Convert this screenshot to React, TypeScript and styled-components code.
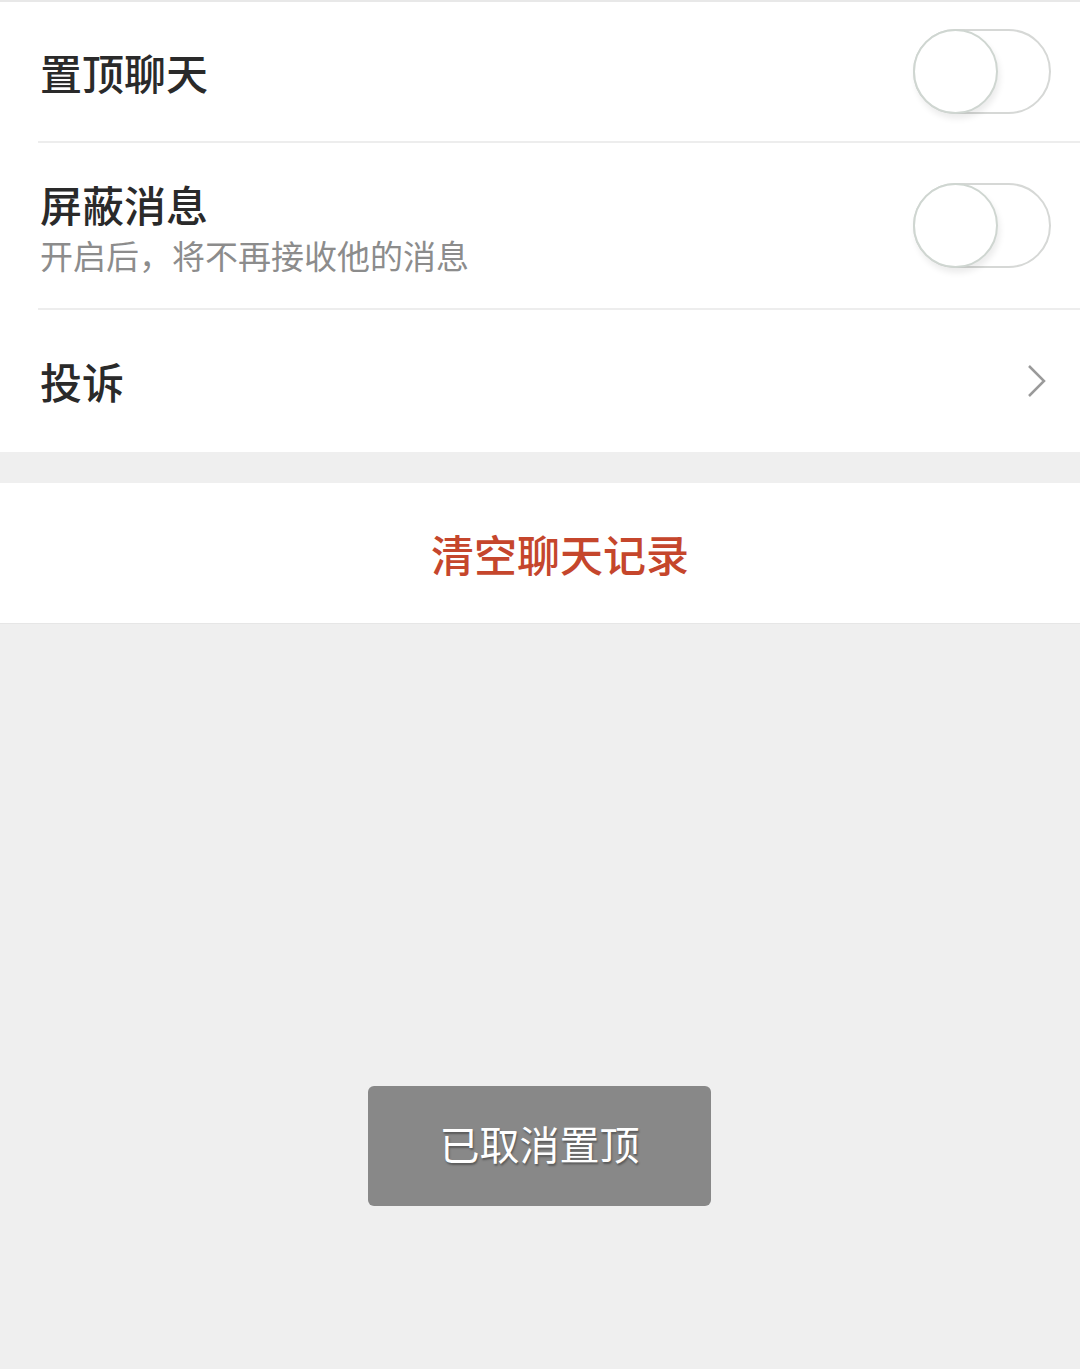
import styled, { createGlobalStyle } from "styled-components";

const GlobalStyle = createGlobalStyle`
  html, body {
    margin: 0;
    padding: 0;
    background: #efefef;
  }
  body {
    font-family: "Noto Sans CJK SC", "Noto Sans", sans-serif;
  }
`;

const Page = styled.div`
  min-height: 1369px;
  background: #efefef;
  border-top: 2px solid #e8e8e8;
  position: relative;
`;

const Group = styled.div`
  background: #fff;
  padding-left: 38px;
  margin-bottom: 31px;
`;

const Row = styled.div<{ $height: number; $last?: boolean }>`
  display: flex;
  align-items: center;
  justify-content: space-between;
  height: ${(p) => p.$height}px;
  padding-left: 2px;
  padding-right: 29px;
  box-sizing: border-box;
  border-bottom: ${(p) => (p.$last ? "none" : "2px solid #ededed")};
`;

const Labels = styled.div`
  display: flex;
  flex-direction: column;
  padding-top: 4px;
`;

const Title = styled.span`
  font-size: 42px;
  font-weight: 500;
  color: #2a2a2a;
  line-height: 48px;
`;

const Sub = styled.span`
  font-size: 33px;
  color: #8c8c8c;
  line-height: 42px;
  margin-top: 6px;
`;

const Track = styled.div`
  position: relative;
  width: 138px;
  height: 85px;
  border-radius: 43px;
  border: 2px solid #d6d8d6;
  box-sizing: border-box;
  background: #fff;
`;

const Knob = styled.div`
  position: absolute;
  left: -2px;
  top: -2px;
  width: 85px;
  height: 85px;
  border-radius: 50%;
  border: 2px solid #cfd6d1;
  box-sizing: border-box;
  background: #fff;
  box-shadow: 2px 5px 6px rgba(0, 0, 0, 0.08);
`;

const ClearButton = styled.div`
  background: #fff;
  height: 140px;
  display: flex;
  align-items: center;
  justify-content: center;
  border-bottom: 1px solid #e6e6e6;
  font-size: 43px;
  font-weight: 500;
  color: #c5462c;
  padding-left: 40px;
`;

const Toast = styled.div`
  position: absolute;
  left: 368px;
  top: 1084px;
  width: 343px;
  height: 120px;
  border-radius: 6px;
  background: #888888;
  display: flex;
  align-items: center;
  justify-content: center;
  padding-bottom: 6px;
  box-sizing: border-box;
  font-size: 40px;
  color: #fff;
  text-shadow: 1px 2px 2px rgba(0, 0, 0, 0.35);
`;

function Switch() {
  return (
    <Track>
      <Knob />
    </Track>
  );
}

function Chevron() {
  return (
    <svg width="24" height="34" viewBox="0 0 24 34" style={{ marginRight: 1 }}>
      <path d="M3 2 L18 17 L3 32" fill="none" stroke="#9a9a9a" strokeWidth="2.5" />
    </svg>
  );
}

export default function App() {
  return (
    <Page>
      <GlobalStyle />
      <Group>
        <Row $height={141}>
          <Title>置顶聊天</Title>
          <Switch />
        </Row>
        <Row $height={167}>
          <Labels>
            <Title>屏蔽消息</Title>
            <Sub>开启后，将不再接收他的消息</Sub>
          </Labels>
          <Switch />
        </Row>
        <Row $height={142} $last>
          <Title>投诉</Title>
          <Chevron />
        </Row>
      </Group>
      <ClearButton>清空聊天记录</ClearButton>
      <Toast>已取消置顶</Toast>
    </Page>
  );
}
